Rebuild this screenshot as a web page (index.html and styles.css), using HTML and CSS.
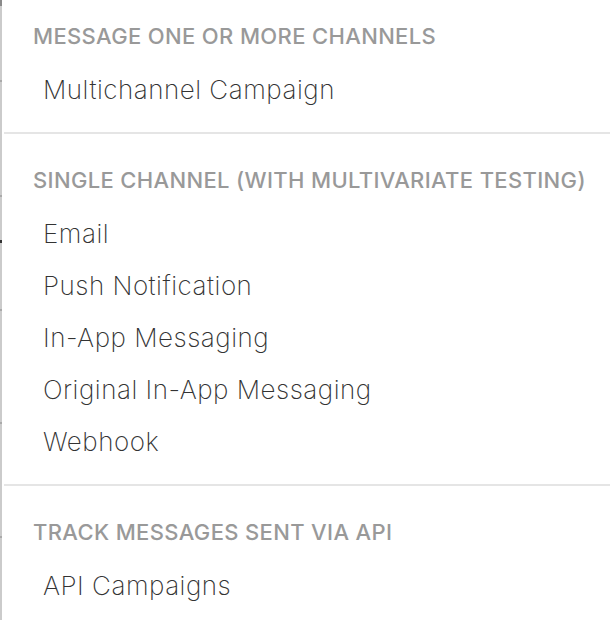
FILE: index.html
```html
<!DOCTYPE html>
<html>
<head>
<meta charset="utf-8">
<link rel="stylesheet" href="styles.css">
</head>
<body>
<div class="page">
  <div class="edge"></div>
  <div class="menu">
    <div class="group first">
      <div class="group-title">Message one or more channels</div>
      <div class="item">Multichannel Campaign</div>
    </div>
    <div class="group">
      <div class="group-title">Single channel (with multivariate testing)</div>
      <div class="item">Email</div>
      <div class="item">Push Notification</div>
      <div class="item">In-App Messaging</div>
      <div class="item">Original In-App Messaging</div>
      <div class="item">Webhook</div>
    </div>
    <div class="group last">
      <div class="group-title">Track messages sent via API</div>
      <div class="item">API Campaigns</div>
    </div>
  </div>
</div>
</body>
</html>
```
FILE: styles.css
```css
html, body {
  margin: 0;
  padding: 0;
  background: #fff;
}
.page {
  display: flex;
  height: 620px;
  overflow: hidden;
}
.edge {
  width: 2px;
  flex: none;
  background:
    linear-gradient(#8a8a8a, #8a8a8a) 0 0 / 2px 6px no-repeat,
    linear-gradient(#aaa, #aaa) 0 80px / 2px 2px no-repeat,
    linear-gradient(#aaa, #aaa) 0 195px / 2px 2px no-repeat,
    linear-gradient(#333, #333) 0 240px / 2px 3px no-repeat,
    linear-gradient(#aaa, #aaa) 0 309px / 2px 2px no-repeat,
    linear-gradient(#aaa, #aaa) 0 422px / 2px 2px no-repeat,
    linear-gradient(#aaa, #aaa) 0 536px / 2px 2px no-repeat,
    #cbcbcb;
}
.menu {
  margin-left: 2px;
  width: 606px;
  font-family: Inter, "Noto Sans", sans-serif;
}
.group {
  padding: 18px 0 16px;
  border-bottom: 2px solid #e5e5e5;
}
.group.first {
  padding-top: 8px;
}
.group.last {
  border-bottom: none;
}
.group-title {
  padding-left: 29px;
  font-size: 22px;
  font-weight: 500;
  letter-spacing: 0.35px;
  color: #999;
  text-transform: uppercase;
  line-height: 56px;
}
.item {
  padding-left: 39px;
  font-size: 26px;
  font-weight: 250;
  letter-spacing: 0.5px;
  color: #333;
  line-height: 52px;
}
```
